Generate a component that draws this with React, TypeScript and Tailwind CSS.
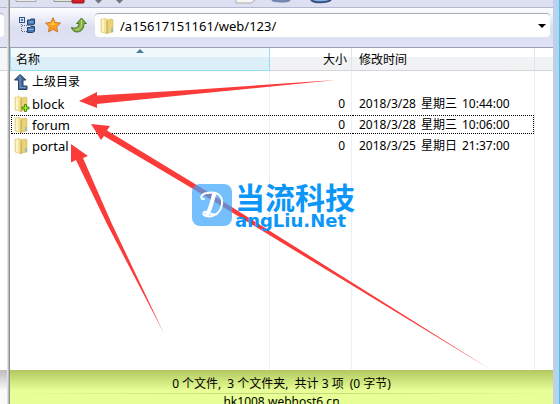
import React from "react";

const files = [
  { name: "block", plus: true, focused: false, size: "0", date: "2018/3/28", day: "星期三", time: "10:44:00" },
  { name: "forum", plus: false, focused: true, size: "0", date: "2018/3/28", day: "星期三", time: "10:06:00" },
  { name: "portal", plus: false, focused: false, size: "0", date: "2018/3/25", day: "星期日", time: "21:37:00" },
];

const summary = ["0 个文件,", "3 个文件夹,", "共计 3 项", "(0 字节)"];

function Folder({ plus = false }: { plus?: boolean }) {
  return (
    <svg className="h-4 w-4 shrink-0" viewBox="0 0 16 16" aria-hidden="true">
      <path d="m6 2 6-1 1 1v12l-7 1.500Z" fill="#ead277" stroke="#cdb053" strokeWidth=".5" />
      <path d="M1 1.200 6 .5 7.500 2v13.500L1 14Z" fill="#f5e498" stroke="#d3b85c" strokeWidth=".5" />
      <path d="M3 1.500v12.300" stroke="#fffad8" strokeWidth="1.500" />
      <path d="M7 2.500v13" stroke="#c2a44a" strokeWidth="1" />
      {plus ? (
        <path d="M10.500 8.500h2v2.500H15v2h-2.500v2.500h-2V13H8v-2h2.500Z" fill="#a5ea2c" stroke="#3f8209" strokeWidth=".9" />
      ) : (
        <path d="M12 10v4" stroke="#74b7e4" strokeWidth="1.300" />
      )}
    </svg>
  );
}

function TreeIcon() {
  return (
    <svg className="h-4 w-4" viewBox="0 0 16 16" aria-hidden="true">
      <path d="M2.500 7v7.500H8M3 8.500h5" fill="none" stroke="#5b6b82" strokeDasharray="1 1" />
      <rect x=".5" y=".5" width="5" height="5" fill="#fff" stroke="#2a5490" />
      <path d="M3 1.500v3M1.500 3h3" stroke="#1f4e92" />
      <path d="M8.500 3h2.500l1-1h3.500v5l-2 1h-5Z" fill="#4679b4" stroke="#223f66" />
      <path d="M8.500 10.500h2.500l1-1h3.500v5l-2 1h-5Z" fill="#4679b4" stroke="#223f66" />
      <path d="M9.500 5h5M9.500 12.500h5" stroke="#8cb7df" />
    </svg>
  );
}

function StarIcon() {
  return (
    <svg className="h-4 w-4" viewBox="0 0 16 16" aria-hidden="true">
      <path d="m8 .7 2.200 4.800 5.300.6-3.900 3.600 1 5.200L8 12.400l-4.600 2.500 1-5.200L.5 6.100l5.300-.6Z" fill="#fb9d18" stroke="#c9783a" />
      <path d="m8 3 1.500 3.500 3.500.4-5 1.600-5-1.600 3.500-.4Z" fill="#ffc437" />
    </svg>
  );
}

function RefreshIcon() {
  return (
    <svg className="h-4 w-4" viewBox="0 0 16 16" aria-hidden="true">
      <path d="M10.500 1 15.500 6.500H13c0 5.500-3 8.500-7 8.500-3 0-5-2-5.500-4.500C5 12 7.500 10.500 8 6.500H5.500Z" fill="#86ae45" stroke="#4b7536" />
      <path d="M10.500 3v4c0 3.500-2 5.500-6 5.700" fill="none" stroke="#c6df7c" />
    </svg>
  );
}

function UpIcon() {
  return (
    <svg className="h-4 w-4 shrink-0" viewBox="0 0 16 16" aria-hidden="true">
      <path d="M6 .5 12 6H9v6h4v3.500H4.500V6H.5Z" fill="#44699c" stroke="#27405f" />
      <path d="M6 2v11.500h6" fill="none" stroke="#7499c3" />
    </svg>
  );
}

function Toolbar() {
  return (
    <div className="h-2 shrink-0 overflow-hidden border-b border-[#b4b7cf] bg-[#dde0f1]">
      <svg className="block h-2 w-[330px]" viewBox="0 0 330 8" aria-hidden="true">
        <path d="M6 0v1.500h20V0" fill="#e9e9ea" stroke="#a9a9ad" />
        <path d="M44 0v1.500h20V0" fill="#e4e8dc" stroke="#96998f" />
        <rect x="62" y="-3" width="12" height="6" rx="1" fill="#d5202b" stroke="#8f1018" />
        <path d="M85 0h7l-3.500 3.500ZM106 0h7l-3.500 3.500Z" fill="#74757c" />
        <path d="M226 0v3h15l4-3" fill="#f7f7f4" stroke="#aaa" />
        <path d="M262 0c3 2 14 2 18 0" fill="#6d9bd0" stroke="#7483aa" strokeWidth="2" />
        <path d="M301 0c3 3 16 3 20 0" fill="#84b2e1" stroke="#394f84" strokeWidth="2" />
      </svg>
    </div>
  );
}

function AddressBar() {
  return (
    <div className="flex h-10 shrink-0 items-start gap-2 border-b border-[#9c9fb4] bg-linear-to-b from-[#fafbfe] from-5% via-[#dbdff0] via-50% to-[#e0e3f5] pr-[3px] pl-[9px] pt-[5px]">
      <div className="flex h-6 items-center gap-[10px]">
        <button type="button" aria-label="目录树"><TreeIcon /></button>
        <button type="button" aria-label="收藏"><StarIcon /></button>
        <button type="button" aria-label="上级"><RefreshIcon /></button>
      </div>
      <div className="flex h-6 min-w-0 flex-1 items-center rounded-sm border-t border-[#a9abb6] bg-white pr-1 pl-[5px]">
        <Folder />
        <input
          aria-label="路径"
          defaultValue="/a15617151161/web/123/"
          className="ml-1 min-w-0 flex-1 bg-transparent text-[13px] leading-5 outline-none"
        />
        <button type="button" aria-label="历史路径">
          <svg className="h-1 w-2" viewBox="0 0 8 4"><path d="M0 0h8L4 4Z" /></svg>
        </button>
      </div>
    </div>
  );
}

function FileTable() {
  const head = "border-b border-[#d5d5d5] border-r border-r-[#e2e3e5] bg-linear-to-b from-white from-40% to-[#f1f2f3] to-40% p-0 font-normal";
  const line = "border-r border-[#e8f0fc] p-0";
  return (
    <table className="h-full w-full table-fixed border-separate border-spacing-0">
      <colgroup>
        <col />
        <col className="w-[82px]" />
        <col className="w-[183px]" />
        <col className="w-[18px]" />
      </colgroup>
      <thead>
        <tr className="h-[23px]">
          <th aria-sort="ascending" className="relative border-x border-b border-[#96d9f9] bg-linear-to-b from-[#f2f9fc] from-40% to-[#dceef7] to-40% p-0 text-left font-normal">
            <svg className="absolute top-px left-1/2 h-1 w-2 -translate-x-1/2" viewBox="0 0 8 4" aria-hidden="true"><path d="M4 0 8 4H0Z" fill="#487c9b" /></svg>
            <button type="button" className="block w-full pt-[2px] pl-[5px] text-left">名称</button>
          </th>
          <th className={head}><button type="button" className="block w-full pt-[2px] pr-1 text-right">大小</button></th>
          <th className={head}><button type="button" className="block w-full pt-[2px] pl-[7px] text-left">修改时间</button></th>
          <th className="border-b border-[#d5d5d5] bg-linear-to-b from-white from-40% to-[#f1f2f3] to-40% p-0" />
        </tr>
      </thead>
      <tbody>
        <tr className="h-[22px]">
          <td className={line}>
            <div className="flex items-center gap-[2px] pl-1"><UpIcon />上级目录</div>
          </td>
          <td className={line} />
          <td className={line} />
          <td className="p-0" />
        </tr>
        {files.map((f) => {
          const edge = f.focused ? "border-black" : "border-transparent";
          return (
            <tr key={f.name} className="h-[21px]">
              <td className={line}>
                <div className={`ml-px flex h-[19px] items-center gap-[2px] border-y border-l border-dotted pl-[2px] text-[13px] ${edge}`}>
                  <Folder plus={f.plus} />{f.name}
                </div>
              </td>
              <td className={line}>
                <div className={`flex h-[19px] items-center justify-end border-y border-dotted pr-[6px] ${edge}`}>{f.size}</div>
              </td>
              <td className={line}>
                <div className={`flex h-[19px] items-center gap-[5px] border-y border-r border-dotted pl-[7px] ${edge}`}>
                  <span>{f.date}</span>
                  <span>{f.day}</span>
                  <span>{f.time}</span>
                </div>
              </td>
              <td className="p-0" />
            </tr>
          );
        })}
        <tr>
          <td className={line} />
          <td className={line} />
          <td className={line} />
          <td className="p-0" />
        </tr>
      </tbody>
    </table>
  );
}

function Watermark() {
  return (
    <div className="absolute top-[184px] left-[192px] flex items-start gap-[3px] text-[#0c97f8]">
      <div className="flex h-[42px] w-10 items-center justify-center rounded-lg bg-[#3aa5fb]/70">
        <svg className="h-8 w-8" viewBox="0 0 32 32" fill="none" stroke="#fff" strokeLinecap="round" aria-hidden="true">
          <path d="M18 6C16 12 15 19 11 26" strokeWidth="4" />
          <path d="M8 10C4 11 4 5 11 4c11-2 16 3 15 11-1 8-8 14-16 12-4-1-3-5 1-4 3 1 6 4 10 2" strokeWidth="2" />
        </svg>
      </div>
      <div>
        <div className="text-[30px] leading-[28px] font-bold">当流科技</div>
        <div className="font-['DejaVu_Sans'] text-[18px] leading-[18px] font-bold">angLiu.Net</div>
      </div>
    </div>
  );
}

export default function App() {
  return (
    <main className="relative flex h-screen overflow-hidden bg-white font-['Noto_Sans','Noto_Sans_CJK_SC',sans-serif] text-[12px] leading-5 text-black">
      <aside className="flex w-[7px] shrink-0 flex-col">
        <div className="h-2 shrink-0 border-b border-[#b4b7cf] bg-[#dde0f1]" />
        <div className="h-10 shrink-0 border-b border-[#9c9fb4] bg-[#e0e3f5] pt-[5px]">
          <div className="mr-[3px] h-6 rounded-r-sm border-t border-[#a9abb6] bg-white" />
        </div>
        <div className="h-[23px] shrink-0 border-b border-[#d5d5d5] bg-[#f5f6f7]" />
        <div className="flex-1" />
        <div className="h-[34px] bg-linear-to-b from-[#bdbdbd] to-[#fafafa] to-60%" />
      </aside>
      <div className="w-[3px] shrink-0 border-x border-r-[#929292] border-l-[#e2e2e2] bg-[#bcbcbc]" />
      <section className="flex min-w-0 flex-1 flex-col">
        <Toolbar />
        <AddressBar />
        <div className="min-h-0 flex-1"><FileTable /></div>
        <footer className="h-[34px] shrink-0 overflow-hidden bg-linear-to-b from-[#b2c85f] to-[#e7ff96] to-60% text-center">
          <p className="flex h-[23px] justify-center gap-[6px] pt-1">
            {summary.map((s) => <span key={s}>{s}</span>)}
          </p>
          <div className="h-px bg-linear-to-r from-transparent via-[#bfd476] to-transparent" />
          <p className="leading-4">hk1008.webhost6.cn</p>
        </footer>
      </section>
      <div className="w-[7px] shrink-0 border-r border-[#42c2e8] bg-[#b9d1ea]" />
      <svg className="pointer-events-none absolute top-0 left-0 h-[404px] w-[560px]" viewBox="0 0 560 404" fill="#fb3a3a" aria-hidden="true">
        <path d="M79 101 97 92v3.500L190 90l146-10-146 14.500L97 104v4Z" />
        <path d="m91 124 19 2-3 4.500L200 187l289 181.500L200 193 104 136l-3 4Z" />
        <path d="m71 144 17 12-5 2 28 64 53 111.500L107 224 76 160l-5 2.500Z" />
      </svg>
      <Watermark />
    </main>
  );
}
